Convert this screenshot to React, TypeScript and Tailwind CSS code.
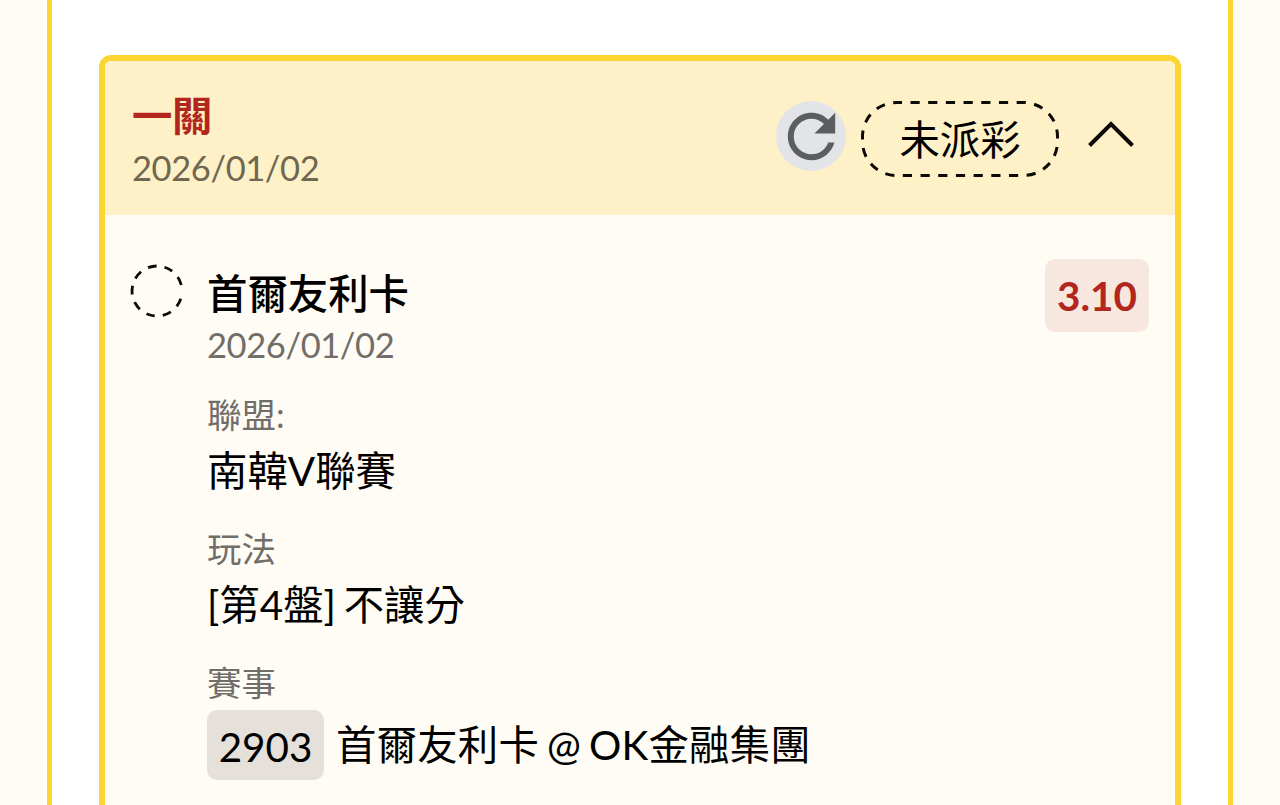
import React from "react";

interface DetailProps {
    label: string;
    children: React.ReactNode;
}

function RefreshIcon() {
    return (
        <svg viewBox="0 0 24 24" className="size-[71px] shrink-0" fill="#5b5d5f">
            <path d="M17.65 6.35C16.2 4.9 14.21 4 12 4c-4.42 0-7.99 3.58-7.99 8s3.57 8 7.99 8c3.73 0 6.84-2.55 7.73-6h-2.08c-.82 2.33-3.04 4-5.65 4-3.31 0-6-2.69-6-6s2.69-6 6-6c1.66 0 3.14.69 4.22 1.78L13 11h7V4l-2.35 2.35z" />
        </svg>
    );
}

function ChevronUp() {
    return (
        <svg width="46" height="28" viewBox="0 0 46 28" fill="none" stroke="#0c0a06" strokeWidth="4">
            <path d="M1.5 25.5 23 4 44.5 25.5" />
        </svg>
    );
}

function StatusPill({ text }: { text: string }) {
    return (
        <div className="relative flex h-[76px] w-[198px] items-center justify-center">
            <svg className="absolute inset-0" width="198" height="76" fill="none" stroke="#0c0a06" strokeWidth="3">
                <rect x="1.5" y="1.5" width="195" height="73" rx="34" strokeDasharray="9.2 8.49" strokeDashoffset="3.7" />
            </svg>
            <span className="pt-[2px] text-[40.4px] leading-none text-black">{text}</span>
        </div>
    );
}

function StatusRing() {
    return (
        <svg width="54" height="54" viewBox="-27 -27 54 54" fill="none" stroke="#0c0a06" strokeWidth="2.8">
            <circle
                r="25"
                pathLength="360"
                transform="rotate(18)"
                strokeDasharray="20 18.5 20 18.5 20 18.5 20 18.5 20 18.5 20 18.5 20 18.5 20 18.5 20 32"
            />
        </svg>
    );
}

function Detail({ label, children }: DetailProps) {
    return (
        <div>
            <div className="text-[34.5px] leading-[45px] text-[#716e69]">{label}</div>
            <div className="mt-px text-[40.4px] leading-[66px] text-black [word-spacing:-2.6px]">{children}</div>
        </div>
    );
}

export default function App() {
    return (
        <div className="h-[805px] overflow-hidden bg-[#fffcf6] px-[47px] font-['Lato','Noto_Sans_CJK_TC',sans-serif]">
            <div className="h-full border-x-[5px] border-[#fbd632] bg-white px-[47px] pt-[55px]">
                <div className="h-[820px] overflow-hidden rounded-[12px] border-[6px] border-[#fbd632] bg-[#fffcf5]">
                    {/* Header */}
                    <div className="flex h-[154px] justify-between bg-[#fef1c7] pl-[27px] pr-[41px]">
                        <div className="pt-[30px]">
                            <div className="text-[40.4px] font-bold leading-[50px] tracking-[-0.5px] text-[#b3261e]">
                                一關
                            </div>
                            <div className="mt-[2px] text-[34.5px] leading-[50px] tracking-[-0.4px] text-[#6f674f]">
                                2026/01/02
                            </div>
                        </div>
                        <div className="flex items-start pt-10">
                            <div className="mr-[15px] flex size-[70px] items-center justify-center rounded-full bg-[#e2e4e7]">
                                <RefreshIcon />
                            </div>
                            <StatusPill text="未派彩" />
                            <div className="ml-[29px] mt-[19px]">
                                <ChevronUp />
                            </div>
                        </div>
                    </div>

                    {/* Bet */}
                    <div className="flex items-start pl-[25px] pr-[26px]">
                        <div className="w-[77px] pt-[49px]">
                            <StatusRing />
                        </div>
                        <div className="flex-1 pt-[53px]">
                            <div className="text-[40.4px] font-medium leading-[52px] text-black">首爾友利卡</div>
                            <div className="text-[34.5px] leading-[50px] tracking-[-0.4px] text-[#716e69]">
                                2026/01/02
                            </div>
                            <div className="mt-[22px] flex flex-col gap-[22px]">
                                <Detail label="聯盟:">南韓V聯賽</Detail>
                                <Detail label="玩法">[第4盤] 不讓分</Detail>
                                <Detail label="賽事">
                                    <div className="mt-[5px] flex items-center gap-[12px]">
                                        <span className="flex h-[70px] w-[117px] items-center justify-center rounded-[10px] bg-[#e5e0da] pt-[3px]">
                                            2903
                                        </span>
                                        <span className="whitespace-nowrap tracking-[0.22px]">
                                            首爾友利卡 @ OK金融集團
                                        </span>
                                    </div>
                                </Detail>
                            </div>
                        </div>
                        <div className="mt-[44px] flex h-[73px] w-[104px] items-center justify-center rounded-[10px] bg-[#f7e7df] pt-[2px] text-[40.4px] font-bold text-[#b3261e]">
                            3.10
                        </div>
                    </div>
                </div>
            </div>
        </div>
    );
}
